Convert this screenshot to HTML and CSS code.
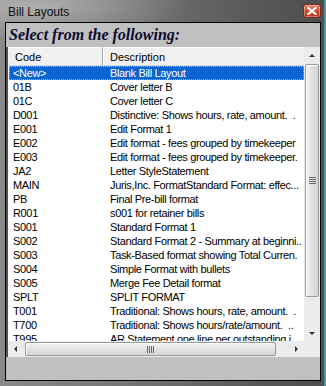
FILE: index.html
```html
<!DOCTYPE html>
<html lang="en">
<head>
    <meta charset="UTF-8">
    <title>Bill Layouts</title>
    <link rel="stylesheet" href="styles.css">
</head>
<body>
    <div class="window">
        <div class="titlebar">
            <span class="title">Bill Layouts</span>
            <span class="close">
                <svg width="10" height="8" viewBox="0 0 10 8">
                    <path d="M1.5 1 L8.5 7 M8.5 1 L1.5 7" stroke="#fff" stroke-width="2.2" stroke-linecap="square"/>
                </svg>
            </span>
        </div>
        <div class="client">
            <div class="prompt">Select from the following:</div>
            <div class="listview">
                <div class="lv-main">
                    <div class="lv-body">
                        <div class="lv-head">
                            <div class="hcell code">Code</div>
                            <div class="hcell desc">Description</div>
                        </div>
                        <ul class="rows">
                            <li class="selected"><span class="code">&lt;New&gt;</span><span class="desc">Blank Bill Layout</span></li>
                            <li><span class="code">01B</span><span class="desc">Cover letter B</span></li>
                            <li><span class="code">01C</span><span class="desc">Cover letter C</span></li>
                            <li><span class="code">D001</span><span class="desc">Distinctive: Shows hours, rate, amount. &nbsp;.</span></li>
                            <li><span class="code">E001</span><span class="desc">Edit Format 1</span></li>
                            <li><span class="code">E002</span><span class="desc">Edit format - fees grouped by timekeeper</span></li>
                            <li><span class="code">E003</span><span class="desc">Edit format - fees grouped by timekeeper.</span></li>
                            <li><span class="code">JA2</span><span class="desc">Letter StyleStatement</span></li>
                            <li><span class="code">MAIN</span><span class="desc">Juris,Inc. FormatStandard Format: effec...</span></li>
                            <li><span class="code">PB</span><span class="desc">Final Pre-bill format</span></li>
                            <li><span class="code">R001</span><span class="desc">s001 for retainer bills</span></li>
                            <li><span class="code">S001</span><span class="desc">Standard Format 1</span></li>
                            <li><span class="code">S002</span><span class="desc">Standard Format 2 - Summary at beginni..</span></li>
                            <li><span class="code">S003</span><span class="desc">Task-Based format showing Total Curren.</span></li>
                            <li><span class="code">S004</span><span class="desc">Simple Format with bullets</span></li>
                            <li><span class="code">S005</span><span class="desc">Merge Fee Detail format</span></li>
                            <li><span class="code">SPLT</span><span class="desc">SPLIT FORMAT</span></li>
                            <li><span class="code">T001</span><span class="desc">Traditional: Shows hours, rate, amount. &nbsp;.</span></li>
                            <li><span class="code">T700</span><span class="desc">Traditional: Shows hours/rate/amount. &nbsp;..</span></li>
                            <li><span class="code">T995</span><span class="desc">AR Statement one line per outstanding i</span></li>
                        </ul>
                    </div>
                    <div class="vscroll">
                        <div class="arrow up"></div>
                        <div class="vtrack">
                            <div class="vthumb">
                                <svg width="7" height="7" viewBox="0 0 7 7">
                                    <path d="M0 0.5 H7 M0 2.5 H7 M0 4.5 H7 M0 6.5 H7" stroke="#6a6a6a" stroke-width="1"/>
                                </svg>
                            </div>
                        </div>
                        <div class="arrow down"></div>
                    </div>
                </div>
                <div class="lv-foot">
                    <div class="hscroll">
                        <div class="arrow left"></div>
                        <div class="htrack">
                            <div class="hthumb">
                                <svg width="7" height="7" viewBox="0 0 7 7">
                                    <path d="M0.5 0 V7 M2.5 0 V7 M4.5 0 V7 M6.5 0 V7" stroke="#6a6a6a" stroke-width="1"/>
                                </svg>
                            </div>
                        </div>
                        <div class="arrow right"></div>
                    </div>
                    <div class="corner"></div>
                </div>
            </div>
            <div class="footer"></div>
        </div>
    </div>
</body>
</html>
```

FILE: styles.css
```css
*{
    margin: 0;
    padding: 0;
    box-sizing: border-box;
}
body{
    width: 326px;
    height: 386px;
    overflow: hidden;
    background: #4a4a4a;
    font-family: "Liberation Sans", Arial, sans-serif;
}
li{
    list-style: none;
}

/* window frame */
.window{
    width: 326px;
    height: 386px;
    display: flex;
    flex-direction: column;
    background:
        linear-gradient(to left, #4b97a8 0, #4b97a8 2px, transparent 2px),
        radial-gradient(ellipse 150px 34px at 40px 6px, rgba(255,255,255,.35), transparent),
        linear-gradient(to right, #8a8a8a, #747474 40%, #5a5a5a 75%, #4e4e4e);
}
.titlebar{
    height: 22px;
    display: flex;
    align-items: center;
    justify-content: space-between;
    padding: 1px 5px 0 8px;
}
.title{
    font-size: 12px;
    color: #111;
}
.close{
    width: 18px;
    height: 14px;
    margin-top: -2px;
    display: flex;
    align-items: center;
    justify-content: center;
    border: 1px solid #7a2a1a;
    border-radius: 3px;
    background: linear-gradient(#e7866a, #cf4a2a 50%, #b8341a);
    box-shadow: inset 0 0 0 1px rgba(255,255,255,.35);
}

.client{
    flex: 1;
    margin: 0 5px 5px;
    border: 1px solid #000;
    background: #c0c0c0;
    display: flex;
    flex-direction: column;
}
.prompt{
    height: 24px;
    padding: 3px 0 0 3px;
    font: bold italic 16px "Liberation Serif", "Times New Roman", serif;
    color: #0b0b30;
}

/* list view */
.listview{
    display: flex;
    flex-direction: column;
    border-left: 2px solid #505050;
}
.lv-main{
    height: 294px;
    display: flex;
}
.lv-body{
    flex: 1;
    overflow: hidden;
    background: #fff;
    font-size: 11px;
    letter-spacing: -0.35px;
    color: #000;
}
.lv-head{
    height: 19px;
    display: flex;
    background: #f0f0f0;
    border-bottom: 1px solid #d8d8d8;
}
.hcell{
    line-height: 18px;
    padding-left: 7px;
    border-top: 1px solid #fff;
    letter-spacing: 0;
}
.hcell.code{
    width: 95px;
    border-right: 1px solid #a0a0a0;
    box-shadow: 1px 0 0 #fff;
}
.hcell.desc{
    flex: 1;
}
.rows li{
    height: 14px;
    line-height: 15px;
    display: flex;
    white-space: nowrap;
}
.rows .code{
    width: 95px;
    padding-left: 5px;
    flex-shrink: 0;
}
.rows .desc{
    padding-left: 7px;
}
.rows li.selected{
    margin-left: 1px;
    background: #0a64d2;
    color: #fff;
    outline: 1px dotted #f5a23a;
    outline-offset: -1px;
}
.rows li.selected .code{
    width: 94px;
    padding-left: 4px;
}

/* scroll bars */
.vscroll{
    width: 16px;
    display: flex;
    flex-direction: column;
    background: #ececec;
}
.arrow{
    width: 16px;
    height: 16px;
    position: relative;
    flex-shrink: 0;
}
.arrow:after{
    content: "";
    position: absolute;
    width: 0;
    height: 0;
    border: 3px solid transparent;
}
.arrow.up:after{
    left: 5px;
    top: 4px;
    border-bottom-color: #333;
}
.arrow.down:after{
    left: 5px;
    top: 7px;
    border-top-color: #333;
}
.arrow.left:after{
    left: 3px;
    top: 5px;
    border-right-color: #333;
}
.arrow.right:after{
    left: 7px;
    top: 5px;
    border-left-color: #333;
}
.vtrack{
    flex: 1;
    padding: 1px 1px 28px 1px;
    display: flex;
}
.vthumb{
    flex: 1;
    display: flex;
    align-items: center;
    justify-content: center;
    border: 1px solid #9a9a9a;
    border-radius: 2px;
    background: linear-gradient(to right, #f4f4f4, #e2e2e2 50%, #d4d4d4);
    box-shadow: inset 1px 1px 0 #fff;
}
.lv-foot{
    height: 16px;
    display: flex;
}
.hscroll{
    flex: 1;
    display: flex;
    background: #ececec;
}
.htrack{
    flex: 1;
    padding: 1px 12px 1px 1px;
    display: flex;
}
.hthumb{
    flex: 1;
    display: flex;
    align-items: center;
    justify-content: center;
    border: 1px solid #9a9a9a;
    border-radius: 2px;
    background: linear-gradient(#f4f4f4, #e2e2e2 50%, #d4d4d4);
    box-shadow: inset 1px 1px 0 #fff;
}
.corner{
    width: 16px;
    background: #ececec;
}
.footer{
    flex: 1;
}
```
